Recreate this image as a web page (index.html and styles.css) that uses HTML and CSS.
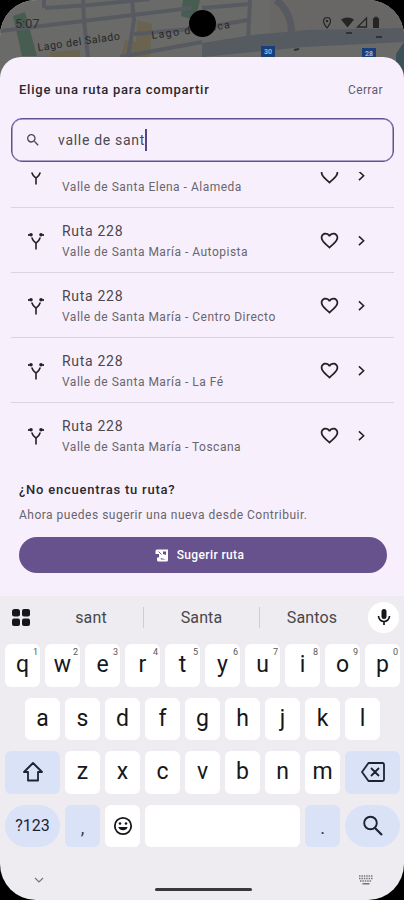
FILE: index.html
```
<!DOCTYPE html>
<html lang="es">
<head>
<meta charset="utf-8">
<meta name="viewport" content="width=device-width, initial-scale=1">
<title>Elige una ruta para compartir</title>
<link rel="stylesheet" href="styles.css">
</head>
<body>
<svg class="defs" width="0" height="0">
  <symbol id="search" viewBox="0 0 24 24"><path d="M15.5 14h-.79l-.28-.27A6.471 6.471 0 0 0 16 9.5 6.5 6.5 0 1 0 9.500 16c1.610 0 3.090-.59 4.230-1.570l.27.28v.79l5 4.990L20.490 19l-4.990-5zm-6 0C7.010 14 5 11.990 5 9.500S7.010 5 9.500 5 14 7.010 14 9.500 11.990 14 9.500 14z"/></symbol>
  <symbol id="fork" viewBox="0 0 16 18"><circle cx="3" cy="2.800" r="1.800"/><circle cx="13" cy="2.800" r="1.800"/><path d="M.9 2v2M15.100 2v2M3.700 5.500Q4.600 8.500 8 11.200 11.400 8.500 12.300 5.500M8 10v7.500" fill="none" stroke="currentColor" stroke-width="1.600"/></symbol>
  <symbol id="heart" viewBox="0 0 24 24"><path d="M16.500 3c-1.740 0-3.410.81-4.500 2.090C10.910 3.810 9.240 3 7.500 3 4.420 3 2 5.420 2 8.500c0 3.780 3.400 6.860 8.550 11.540L12 21.350l1.450-1.320C18.600 15.360 22 12.280 22 8.500 22 5.420 19.580 3 16.500 3zm-4.400 15.550l-.1.1-.1-.1C7.140 14.240 4 11.390 4 8.500 4 6.500 5.500 5 7.500 5c1.540 0 3.040.99 3.570 2.360h1.870C13.460 5.990 14.960 5 16.500 5c2 0 3.500 1.500 3.500 3.500 0 2.890-3.140 5.740-7.900 10.050z"/></symbol>
  <symbol id="chevron" viewBox="0 0 24 24"><path d="M8.500 4l8 7.500-8 7.500" fill="none" stroke="currentColor" stroke-width="2.700"/></symbol>
</svg>
<main class="phone">
  <header class="map">
    <svg class="map-art" width="404" height="80" viewBox="0 0 404 80">
      <path fill="#6a6a68" d="M0 0h404v80H0z"/>
      <path fill="#686765" d="M270 0h134v40l-134-8z"/>
      <path fill="#485d52" d="M13 16l12-4 12 44H22zM183 0h17l-5 20-14-4z"/>
      <path fill="#69634f" d="M125 40l12 2-2 15h-14zM137 20l15 4-2 33h-14zM50 52l30-2v8H50z"/>
      <path fill="#565b61" d="M202 43l50-8 56-5 96-2v14l-100 5-102 10z"/>
      <g fill="none" stroke="#575b61" stroke-width="4">
        <path d="M0 31l83-10 50-6 58-7M45 8l45-3 60-6M44 0v8M83 0l1 20 4 37M132 0l2 20-6 37M134 34l68-6 46-8M120 57l82-15M250 0l-2 42M202 8l48-4"/>
        <path d="M276 0q18 14 15 40" stroke-width="7"/>
      </g>
      <path fill="#3c5058" d="M404 42v38h-8V54z"/>
      <path fill="#163f7c" d="M261 46h14v12h-14zM362 48h14v12h-14z"/>
      <g fill="#252628" font-family="Roboto, sans-serif">
        <text x="38" y="51" font-size="10.500" textLength="83" transform="rotate(-8 38 51)">Lago del Salado</text>
        <text x="152" y="39" font-size="10.500" textLength="79" transform="rotate(-8 152 39)">Lago de Yuca</text>
      </g>
      <g fill="#a3b5cf" font-family="Roboto, sans-serif" font-size="7" font-weight="700"><text x="264" y="54">30</text><text x="365" y="56">28</text></g>
      <path d="M294 50l5-1M346 33h6M376 37h6" stroke="#303236" stroke-width="2"/>
    </svg>
    <div class="status">
      <time>5:07</time>
      <span class="camera"></span>
      <svg width="60" height="14" viewBox="0 0 60 14">
        <path d="M5 12Q1.500 7.500 1.500 5a3.500 3.500 0 0 1 7 0Q8.500 7.500 5 12z" fill="none" stroke="#252525" stroke-width="1.200"/><circle cx="5" cy="5" r="1.200" fill="#252525"/>
        <path d="M19 3.500q6.500-4 13 0L25.500 11.500z" fill="#252525"/>
        <path d="M44.500 2v9h-9z" fill="none" stroke="#252525" stroke-width="1.300"/>
        <path d="M51 2h1.500V.8h3V2H57v10h-6z" fill="#252525"/>
      </svg>
    </div>
  </header>

  <section class="sheet">
    <div class="heading"><h1>Elige una ruta para compartir</h1><button class="close">Cerrar</button></div>
    <div class="field"><svg class="i16"><use href="#search"/></svg><span>valle de sant</span><i class="caret"></i></div>
    <ul class="routes">
      <li><svg class="fork"><use href="#fork"/></svg><div class="info partial"><small>Valle de Santa Elena - Alameda</small></div><svg class="heart"><use href="#heart"/></svg><svg class="chev"><use href="#chevron"/></svg></li>
      <li><svg class="fork"><use href="#fork"/></svg><div class="info"><b>Ruta 228</b><small>Valle de Santa María - Autopista</small></div><svg class="heart"><use href="#heart"/></svg><svg class="chev"><use href="#chevron"/></svg></li>
      <li><svg class="fork"><use href="#fork"/></svg><div class="info"><b>Ruta 228</b><small>Valle de Santa María - Centro Directo</small></div><svg class="heart"><use href="#heart"/></svg><svg class="chev"><use href="#chevron"/></svg></li>
      <li><svg class="fork"><use href="#fork"/></svg><div class="info"><b>Ruta 228</b><small>Valle de Santa María - La Fé</small></div><svg class="heart"><use href="#heart"/></svg><svg class="chev"><use href="#chevron"/></svg></li>
      <li><svg class="fork"><use href="#fork"/></svg><div class="info"><b>Ruta 228</b><small>Valle de Santa María - Toscana</small></div><svg class="heart"><use href="#heart"/></svg><svg class="chev"><use href="#chevron"/></svg></li>
    </ul>
    <div class="suggest">
      <h2>¿No encuentras tu ruta?</h2>
      <p>Ahora puedes sugerir una nueva desde Contribuir.</p>
      <button class="primary">
        <svg width="14" height="13" viewBox="0 0 14 13"><path fill="#fff" d="M.5 2Q.5 .5 2 .5h11v10.500a1.500 1.500 0 0 1-1.500 1.500h-8A1.500 1.500 0 0 1 2 11V8.500h2V5H.5Z"/><path d="M3.500 2.500l3 3" stroke="#67528f" stroke-width="1"/><path d="M8 2.500h3v3.500L8 5zM5.500 9l5.500 1.500H6z" fill="#67528f"/></svg>
        <span>Sugerir ruta</span>
      </button>
    </div>
  </section>

  <section class="keyboard">
    <div class="words">
      <svg class="apps" width="18" height="17" viewBox="0 0 18 17"><rect width="8" height="7.500" rx="2.500"/><rect x="10" width="8" height="7.500" rx="2"/><rect y="9.500" width="8" height="7.500" rx="2"/><rect x="10" y="9.500" width="8" height="7.500" rx="2"/></svg>
      <span class="word first">sant</span><span class="word">Santa</span><span class="word last">Santos</span>
      <span class="mic"><svg width="14" height="18" viewBox="0 0 14 18"><rect x="4.500" y="1" width="5" height="10" rx="2.500"/><path d="M1.500 8a5.500 5.500 0 0 0 11 0M7 13.500V17" fill="none" stroke="currentColor" stroke-width="1.700"/></svg></span>
    </div>
    <div class="keys">
      <kbd>q<sup>1</sup></kbd><kbd>w<sup>2</sup></kbd><kbd>e<sup>3</sup></kbd><kbd>r<sup>4</sup></kbd><kbd>t<sup>5</sup></kbd><kbd>y<sup>6</sup></kbd><kbd>u<sup>7</sup></kbd><kbd>i<sup>8</sup></kbd><kbd>o<sup>9</sup></kbd><kbd>p<sup>0</sup></kbd>
    </div>
    <div class="keys inset">
      <kbd>a</kbd><kbd>s</kbd><kbd>d</kbd><kbd>f</kbd><kbd>g</kbd><kbd>h</kbd><kbd>j</kbd><kbd>k</kbd><kbd>l</kbd>
    </div>
    <div class="keys">
      <kbd class="wide"><svg width="22" height="22" viewBox="0 0 22 22"><path d="M11 2L2 11h4v8.500h10V11h4z" fill="none" stroke="currentColor" stroke-width="1.800" stroke-linejoin="round"/></svg></kbd>
      <kbd>z</kbd><kbd>x</kbd><kbd>c</kbd><kbd>v</kbd><kbd>b</kbd><kbd>n</kbd><kbd>m</kbd>
      <kbd class="wide"><svg width="24" height="20" viewBox="0 0 24 20"><path d="M7.500 1H21.500a1.500 1.500 0 0 1 1.500 1.500v15a1.500 1.500 0 0 1-1.500 1.500H7.500L1 10zM10 6l8 8M18 6l-8 8" fill="none" stroke="currentColor" stroke-width="1.800" stroke-linejoin="round"/></svg></kbd>
    </div>
    <div class="keys">
      <kbd class="wide round">?123</kbd><kbd class="blue">,</kbd>
      <kbd><svg width="20" height="20" viewBox="0 0 20 20"><circle cx="10" cy="10" r="8.200" fill="none" stroke="currentColor" stroke-width="1.800"/><circle cx="7" cy="7.500" r="1.300"/><circle cx="13" cy="7.500" r="1.300"/><path d="M5.300 11h9.400a5 5 0 0 1-9.400 0z"/></svg></kbd>
      <kbd class="space"></kbd><kbd class="blue dot">.</kbd>
      <kbd class="wide round"><svg width="22" height="22" viewBox="0 0 22 22"><path d="M13 13l7 7" stroke="currentColor" stroke-width="2.200"/><circle cx="8.500" cy="8" r="6.300" fill="none" stroke="currentColor" stroke-width="1.900"/></svg></kbd>
    </div>
    <footer class="nav">
      <svg width="10" height="6" viewBox="0 0 10 6"><path d="M1 1l4 4 4-4" fill="none" stroke="currentColor" stroke-width="1.200"/></svg>
      <span class="home"></span>
      <svg class="kb" width="16" height="10" viewBox="0 0 16 10"><path d="M1 1h14M1 3.500h14M2 6h12" stroke="currentColor" stroke-width="1.300" stroke-dasharray="1.500 .9"/><path d="M4.500 8.800h7" stroke="currentColor" stroke-width="1.500"/></svg>
    </footer>
  </section>
</main>
</body>
</html>
```
FILE: styles.css
```
* { box-sizing: border-box; }
body { margin: 0; background: #000; font-family: Roboto, sans-serif; }
.defs { position: absolute; }
svg { display: block; fill: currentColor; flex: none; }
button { border: 0; padding: 0; font: inherit; background: none; }
.phone { width: 404px; height: 900px; overflow: hidden; border-radius: 36px; background: #eeecf0; display: flex; flex-direction: column; }

.map { height: 57px; position: relative; flex: none; }
.map-art { position: absolute; left: 0; top: 0; }
.status { position: relative; height: 46px; padding: 0 22px 0 15px; display: flex; align-items: center; color: #2e3030; font-size: 13px; letter-spacing: -.2px; }
.status time { width: 174px; }
.camera { width: 27px; height: 27px; margin-right: auto; border-radius: 50%; background: #000; }

.sheet { position: relative; height: 539px; flex: none; background: #f7f0fc; border-radius: 21px 21px 0 0; display: flex; flex-direction: column; }
.heading { height: 61px; padding: 4px 21px 0 19px; display: flex; align-items: center; justify-content: space-between; }
h1 { margin: 0; font-size: 13px; font-weight: 500; letter-spacing: .76px; color: #2b282e; }
.close { font-size: 12px; letter-spacing: .4px; color: #625b70; }
.field { height: 44px; flex: none; margin: 0 10px 0 11px; border: 1.500px solid #60508f; border-radius: 11px; display: flex; align-items: center; padding-left: 13px; font-size: 14px; letter-spacing: .7px; color: #4c4852; box-shadow: inset 0 0 0 .5px #60508f; }
.i16 { width: 16px; height: 16px; margin-right: 17px; }
.caret { width: 2px; height: 22px; background: #54448a; }
.routes { list-style: none; margin: 10px 10px 0 11px; padding: 0; height: 296px; flex: none; overflow: hidden; display: flex; flex-direction: column; justify-content: flex-end; }
.routes li { height: 65px; flex: none; border-bottom: 1px solid #dbd4df; display: flex; align-items: center; padding: 1px 26px 0 17px; color: #242126; }
.routes li:last-child { border-color: transparent; }
.fork { width: 16px; height: 18px; margin-right: 18px; }
.info { flex: 1; display: flex; flex-direction: column; gap: 3px; padding-top: 2px; }
.partial { padding-top: 23px; }
.info b { font-size: 14px; line-height: 18px; font-weight: 400; letter-spacing: .7px; color: #4a474e; }
.info small { font-size: 12px; line-height: 18px; letter-spacing: .5px; color: #69656e; }
.heart { width: 21px; height: 21px; margin-right: 14px; }
.chev { width: 14px; height: 14px; }
.suggest { padding: 13px 18px 0 19px; }
h2 { margin: 0; font-size: 13px; line-height: 18px; font-weight: 500; letter-spacing: .78px; color: #2b282e; }
.suggest p { margin: 7px 0 13px; font-size: 12px; line-height: 18px; letter-spacing: .5px; color: #68646d; }
.primary { width: 368px; height: 36px; border-radius: 18px; background: #68528e; color: #fff; font-size: 12px; font-weight: 500; letter-spacing: .38px; display: flex; align-items: center; justify-content: center; gap: 8px; padding-right: 7px; }

.keyboard { flex: 1; display: flex; flex-direction: column; gap: 11px; padding: 0 4px 0 5px; color: #17171b; }
.words { height: 37px; padding: 5px 0 0 7px; display: flex; align-items: center; }
.word { width: 116px; height: 21px; line-height: 21px; text-align: center; font-size: 16px; letter-spacing: .15px; color: #48474b; border-right: 1px solid #cfcdd2; }
.apps { margin-right: -2px; }
.first { padding-left: 11px; }
.last { border: 0; width: 104px; }
.mic { width: 31px; height: 31px; margin-left: 4px; border-radius: 50%; background: #fff; display: flex; align-items: center; justify-content: center; }
.keys { display: flex; justify-content: space-between; height: 42.500px; flex: none; }
.inset { padding: 0 20px; }
kbd { position: relative; width: 35px; border-radius: 6px; background: #fff; font: 400 23px Roboto, sans-serif; line-height: 41px; display: flex; justify-content: center; }
kbd svg { align-self: center; }
kbd sup { position: absolute; right: 2px; top: 2px; font-size: 9px; line-height: 12px; color: #57575b; }
.wide { width: 55px; background: #dae2f8; color: #1c2334; }
.round { border-radius: 22px; font-size: 16px; line-height: 41px; }
.blue { background: #dae2f8; line-height: 45px; font-size: 18px; color: #30374a; }
.space { width: 155px; }
.nav { height: 43px; display: flex; align-items: flex-start; justify-content: space-between; padding: 19px 26px 0 29px; color: #77757b; }
.home { width: 97px; height: 3px; margin: 11px 0 0 4px; border-radius: 2px; background: #39383b; }
.kb { margin-top: -2px; }
```
